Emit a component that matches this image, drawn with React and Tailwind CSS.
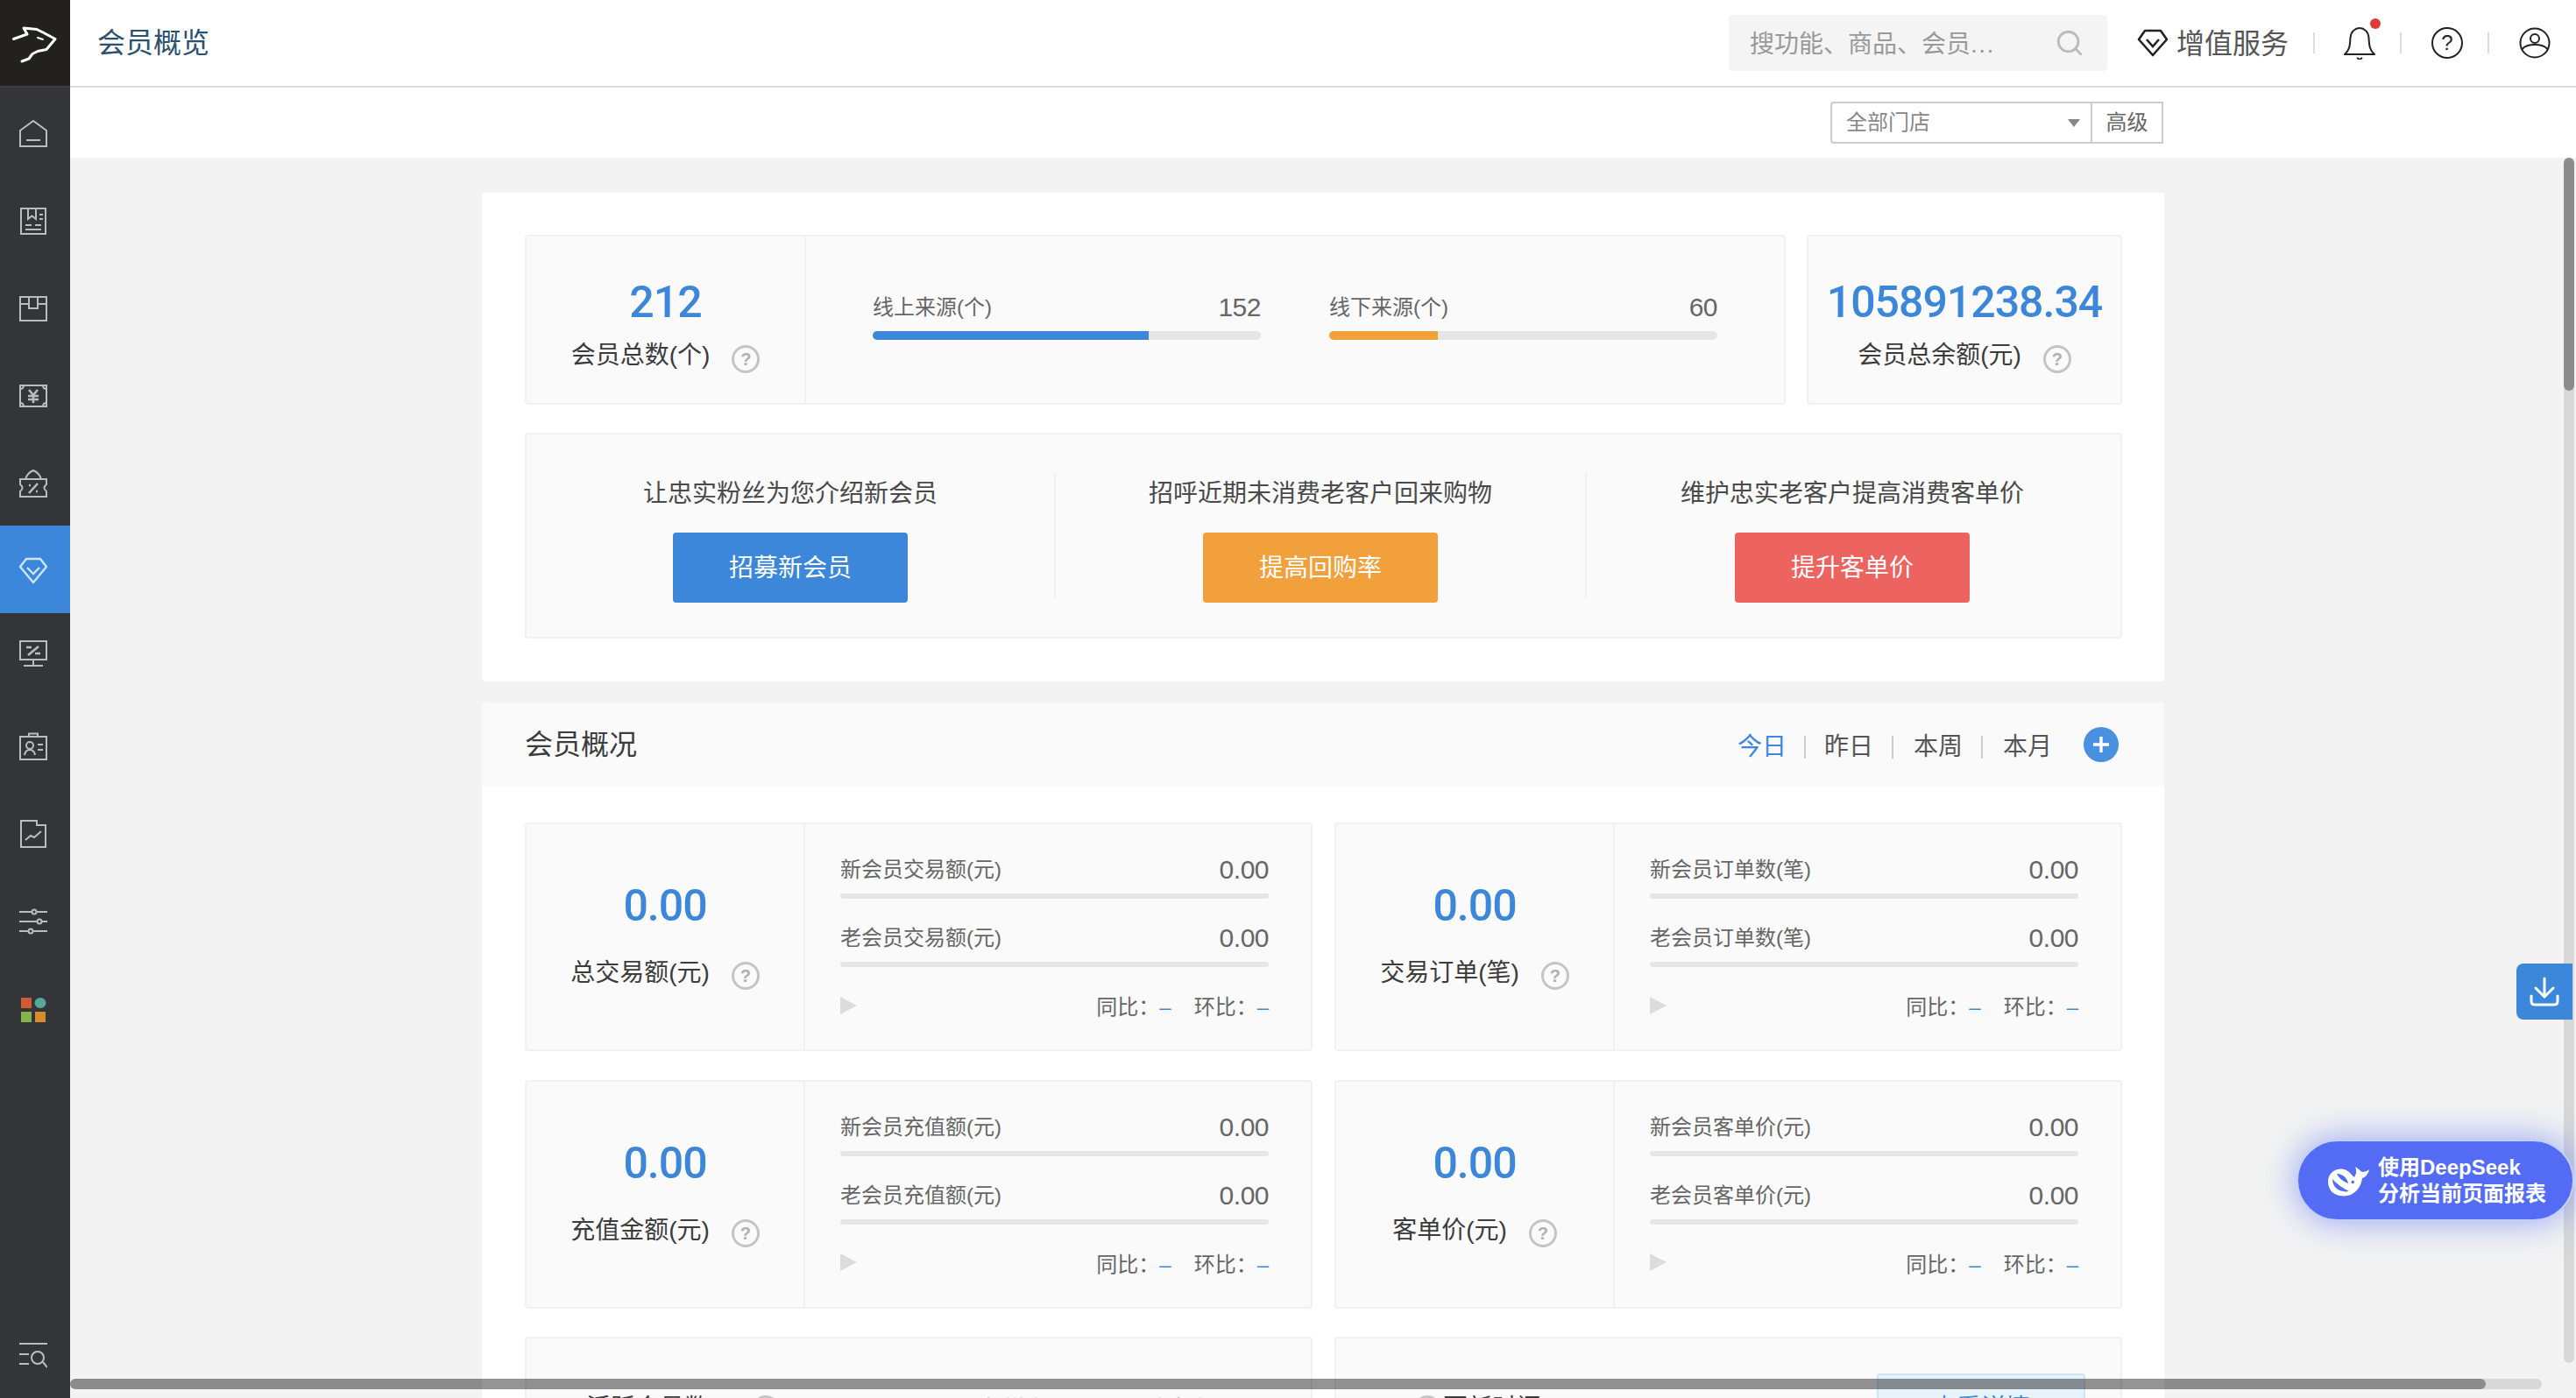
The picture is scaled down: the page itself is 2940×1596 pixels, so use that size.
import { Search } from 'lucide-react';

const FONT = "font-['Liberation_Sans','Noto_Sans_CJK_SC',sans-serif]";

function NavSvg({ children, stroke = '#bcbcbc', width = 2, className = '' }) {
  return (
    <svg className={className} width="32" height="32" viewBox="0 0 32 32" fill="none" stroke={stroke} strokeWidth={width}>
      {children}
    </svg>
  );
}

const navIcons = [
  <NavSvg key="home">
    <path d="M1 13 L16 2 L31 13 V31 H1 Z M8 24 H24" />
  </NavSvg>,
  <NavSvg key="book">
    <path d="M2 2 H30 V31 H2 Z M10 2 V14 L14.5 10.5 L19 14 V2 M23 9 H27 M23 14 H27 M7 21 H14 M18 21 H25 M7 26 H25" />
  </NavSvg>,
  <NavSvg key="box">
    <path d="M1 3 H31 V30 H1 Z M11 3 V16 H21 V3 M1 11 H11 M21 11 H31" />
  </NavSvg>,
  <NavSvg key="money">
    <path d="M1 4 H31 V28 H1 Z M1 8 Q5 8 5 4 M27 4 Q27 8 31 8 M1 24 Q5 24 5 28 M27 28 Q27 24 31 24" />
    <path d="M11 9 L16 15 L21 9 M16 15 V24 M10 16 H22 M10 20 H22" strokeWidth="2.6" />
  </NavSvg>,
  <NavSvg key="ticket">
    <path d="M1 11 H31 V17 Q26 21 31 25 V31 H1 V25 Q6 21 1 17 Z M7 11 Q9 4 16 1 Q23 4 25 11" />
    <path d="M11 27 L21 16 M11 18 H13 M19 25 H21" strokeWidth="2.6" />
  </NavSvg>,
  <NavSvg key="diamond" stroke="#cfe3fa" width="2.4">
    <path d="M8 2 H24 L31 11 L16 29 L1 11 Z" strokeLinejoin="round" />
    <path d="M9 12 L16 19 L23 12" />
  </NavSvg>,
  <NavSvg key="screen" className="mb-[12px]">
    <path d="M1 2 H31 V23 H1 Z M16 23 V29 M5 30 H27" />
    <path d="M10 18 L22 8 M8 9 H14 M18 16 H24" strokeWidth="2.6" />
  </NavSvg>,
  <NavSvg key="card">
    <path d="M1 5 H31 V31 H1 Z M11 1.5 H21 V5 H11 Z" />
    <circle cx="12" cy="15" r="4" />
    <path d="M6 26 Q7 20 12 20 Q17 20 18 26 M21 14 H27 M21 20 H27" />
  </NavSvg>,
  <NavSvg key="chart">
    <path d="M2 1 H20 V6 H30 V31 H2 Z M7 23 L13 18 L17 20 L25 13" />
  </NavSvg>,
  <NavSvg key="sliders">
    <path d="M0 5 H32 M0 16 H32 M0 27 H32" />
    <circle cx="17" cy="5" r="2.5" fill="#333538" />
    <circle cx="23" cy="16" r="2.5" fill="#333538" />
    <circle cx="13" cy="27" r="2.5" fill="#333538" />
  </NavSvg>,
  <svg key="grid" width="32" height="32" viewBox="0 0 32 32">
    <rect x="2" y="3" width="12" height="12" fill="#cf5a36" />
    <ellipse cx="24" cy="9" rx="6.5" ry="6" fill="#56a89c" />
    <rect x="2" y="19" width="12" height="12" fill="#84b34e" />
    <rect x="18" y="19" width="12" height="12" fill="#d98a2e" />
  </svg>,
];

function QuestionMark({ className = 'mt-[8px]' }) {
  return (
    <span className={'flex h-[32px] w-[32px] shrink-0 items-center justify-center rounded-full border-[3px] border-[#c4c4c4] text-[20px] leading-none font-bold text-[#b0b0b0] ' + className}>
      ?
    </span>
  );
}

function StatHead({ value, label }) {
  return (
    <div className="flex flex-col items-center">
      <div className="mb-[13px] font-['Roboto',sans-serif] text-[50px] leading-[56px] font-medium tracking-[-1px] text-[#3c87d9]">{value}</div>
      <div className="flex items-center gap-[25px]">
        <span className="text-[28px] leading-[40px] text-[#3c3c3c]">{label}</span>
        <QuestionMark />
      </div>
    </div>
  );
}

function Card({ className = '', children }) {
  return (
    <div className={'overflow-hidden rounded-[4px] border-2 border-[#f1f1f1] bg-[#fafafa] ' + className}>{children}</div>
  );
}

function SourceBar({ label, value, percent, color }) {
  return (
    <div>
      <div className="flex items-center justify-between text-[#666]">
        <span className="text-[24px] leading-[36px]">{label}</span>
        <span className="text-[30px] leading-[36px] tracking-[-0.5px]">{value}</span>
      </div>
      <div className="mt-[9px] h-[10px] overflow-hidden rounded-[5px] bg-[#e6e6e6]">
        <div className="h-full" style={{ width: `${percent}%`, backgroundColor: color }} />
      </div>
    </div>
  );
}

function Action({ title, button, color, last }) {
  return (
    <div className={'flex h-[143px] flex-col items-center ' + (last ? '' : 'border-r-2 border-[#f1f1f1]')}>
      <div className="text-[28px] leading-[48px] text-[#4a4a4a]">{title}</div>
      <button type="button" className={'mt-[20px] h-[80px] w-[268px] shrink-0 rounded-[4px] pt-[1px] text-[28px] text-white ' + color}>
        {button}
      </button>
    </div>
  );
}

function SubRow({ label, className = '' }) {
  return (
    <div className={className}>
      <div className="flex items-center justify-between text-[#666]">
        <span className="text-[24px] leading-[36px]">{label}</span>
        <span className="text-[30px] leading-[36px] tracking-[-0.5px]">0.00</span>
      </div>
      <div className="mt-[9px] h-[6px] rounded-[3px] bg-[#e6e6e6]" />
    </div>
  );
}

function StatCard({ total, newLabel, oldLabel }) {
  return (
    <Card className="flex h-[261px]">
      <div className="w-[318px] shrink-0 border-r-2 border-[#f1f1f1] pt-[65px]">
        <div className="flex flex-col items-center">
          <div className="font-['Roboto',sans-serif] text-[50px] leading-[56px] font-medium tracking-[-1px] text-[#3c87d9]">0.00</div>
          <div className="mt-[29px] flex items-center gap-[25px]">
            <span className="text-[28px] leading-[40px] text-[#3c3c3c]">{total}</span>
            <QuestionMark className="mt-[6px]" />
          </div>
        </div>
      </div>
      <div className="flex-1 pt-[34px] pr-[48px] pl-[40px]">
        <SubRow label={newLabel} />
        <SubRow label={oldLabel} className="mt-[27px]" />
        <div className="mt-[28px] flex h-[36px] items-center justify-between text-[24px] text-[#666]">
          <span className="-mt-[5px] h-0 w-0 border-y-[10px] border-l-[19px] border-y-transparent border-l-[#dcdcdc]" />
          <div className="flex gap-[26px]">
            <span>同比：<span className="text-[#3c87d9]">–</span></span>
            <span>环比：<span className="text-[#3c87d9]">–</span></span>
          </div>
        </div>
      </div>
    </Card>
  );
}

const stats = [
  { total: '总交易额(元)', newLabel: '新会员交易额(元)', oldLabel: '老会员交易额(元)' },
  { total: '交易订单(笔)', newLabel: '新会员订单数(笔)', oldLabel: '老会员订单数(笔)' },
  { total: '充值金额(元)', newLabel: '新会员充值额(元)', oldLabel: '老会员充值额(元)' },
  { total: '客单价(元)', newLabel: '新会员客单价(元)', oldLabel: '老会员客单价(元)' },
];

const ranges = ['今日', '昨日', '本周', '本月'];

export default function App() {
  return (
    <div className={'relative flex h-screen overflow-hidden bg-[#f3f3f3] ' + FONT}>
      <aside className="flex w-[80px] shrink-0 flex-col bg-[#333538]">
        <div className="h-[98px] shrink-0 bg-[#222120]">
          <svg width="80" height="98" viewBox="0 0 80 98" fill="none" stroke="#ffffff" strokeWidth="3" strokeLinejoin="round" strokeLinecap="round">
            <path d="M15.5 44.5 L31 39 L27 32 L42 33.5 L50 37.5 L63 44.5 L53 56.5 L43 58.5 L37 61.5 L33 67 L25 70" />
            <path d="M43 43 L49 45" strokeWidth="2" />
          </svg>
        </div>
        <div className="h-[2px] shrink-0 bg-[#3e4043]" />
        {navIcons.map((icon, i) => (
          <div key={i} className={'flex h-[100px] shrink-0 items-center pt-[4px] pl-[22px] ' + (i === 5 ? 'bg-[#3c87d9]' : '')}>
            {icon}
          </div>
        ))}
        <div className="mt-auto pb-[32px] pl-[22px]">
          <NavSvg>
            <path d="M0 2 H32 M0 14 H11 M0 25 H11 M27 23 L32 29" />
            <circle cx="21" cy="18" r="7" />
          </NavSvg>
        </div>
      </aside>

      <div className="flex min-w-0 flex-1 flex-col">
        <header className="flex h-[100px] shrink-0 items-center border-b-2 border-[#dddddd] bg-white pr-[29px] pl-[31px]">
          <h1 className="text-[32px] font-normal text-[#2c5070]">会员概览</h1>
          <div className="ml-auto flex h-[64px] w-[432px] items-center justify-between rounded-[4px] bg-[#f4f4f4] pr-[26px] pl-[24px]">
            <span className="pt-[3px] text-[28px] text-[#999]">搜功能、商品、会员<span className="tracking-[1.5px]">...</span></span>
            <Search size={34} strokeWidth={2} color="#bbbbbb" />
          </div>
          <svg className="ml-[34px]" width="36" height="32" viewBox="0 0 36 32" fill="none" stroke="#222" strokeWidth="2.6">
            <path d="M9 2 H27 L34 12 L18 30 L2 12 Z" strokeLinejoin="round" />
            <path d="M11 12 L18 20 L25 12" />
          </svg>
          <span className="ml-[9px] pt-[2px] text-[32px] text-[#555]">增值服务</span>
          <span className="ml-[28px] h-[24px] w-[2px] bg-[#dddddd]" />
          <div className="relative ml-[33px] h-[36px] w-[36px]">
            <svg width="36" height="37" viewBox="0 0 36 37" fill="none" stroke="#222" strokeWidth="2">
              <path d="M1 31 H35 C29 26 29 20 28.5 12 C28 5 23 1 18 1 C13 1 8 5 7.5 12 C7 20 7 26 1 31 Z" />
              <path d="M15 35 L18 37 L21 35" />
            </svg>
            <span className="absolute -top-[10px] left-[30px] h-[12px] w-[12px] rounded-full bg-[#e03c31]" />
          </div>
          <span className="ml-[28px] h-[24px] w-[2px] bg-[#dddddd]" />
          <span className="ml-[34px] flex h-[36px] w-[36px] items-center justify-center rounded-full border-2 border-[#222] text-[24px] leading-none text-[#222]">?</span>
          <span className="ml-[28px] h-[24px] w-[2px] bg-[#dddddd]" />
          <svg className="ml-[34px]" width="36" height="36" viewBox="0 0 36 36" fill="none" stroke="#222" strokeWidth="2">
            <circle cx="18" cy="18" r="16.5" />
            <circle cx="18" cy="13" r="5" />
            <path d="M3.5 25 C7 21 12 20 18 20 C24 20 29 21 32.5 25" />
          </svg>
        </header>

        <div className="flex h-[80px] shrink-0 items-center bg-white pl-[2009px] text-[24px]">
          <div className="flex h-[48px] w-[299px] items-center justify-between rounded-l-[4px] border-2 border-[#cccccc] pr-[12px] pl-[16px] text-[#888]">
            <span>全部门店</span>
            <span className="h-0 w-0 border-x-[7px] border-t-[9px] border-x-transparent border-t-[#888]" />
          </div>
          <div className="-ml-[2px] flex h-[48px] w-[83px] items-center justify-center border-2 border-[#cccccc] text-[#666]">高级</div>
        </div>

        <main className="min-h-0 flex-1 overflow-hidden pt-[40px] pl-[470px]">
          <section className="w-[1920px] rounded-[4px] bg-white pt-[48px] pr-[48px] pb-[49px] pl-[49px]">
            <div className="flex gap-[24px]">
              <Card className="flex h-[194px] flex-1">
                <div className="w-[319px] shrink-0 border-r-2 border-[#f1f1f1] pt-[47px]">
                  <StatHead value="212" label="会员总数(个)" />
                </div>
                <div className="grid flex-1 grid-cols-2 gap-[78px] px-[76px] pt-[63px]">
                  <SourceBar label="线上来源(个)" value="152" percent={71} color="#3c87d9" />
                  <SourceBar label="线下来源(个)" value="60" percent={28} color="#f2a03b" />
                </div>
              </Card>
              <Card className="h-[194px] w-[360px] shrink-0 pt-[47px]">
                <StatHead value="105891238.34" label="会员总余额(元)" />
              </Card>
            </div>
            <Card className="mt-[32px] grid h-[235px] grid-cols-[604px_606px_606px] pt-[44px]">
              <Action title="让忠实粉丝为您介绍新会员" button="招募新会员" color="bg-[#3c87d9]" />
              <Action title="招呼近期未消费老客户回来购物" button="提高回购率" color="bg-[#f2a03b]" />
              <Action title="维护忠实老客户提高消费客单价" button="提升客单价" color="bg-[#ed6360]" last />
            </Card>
          </section>

          <section className="mt-[24px] w-[1920px] rounded-t-[4px] bg-white">
            <div className="flex h-[96px] items-center justify-between rounded-t-[4px] bg-[#fafafa] pr-[52px] pl-[49px]">
              <h2 className="text-[32px] font-normal text-[#3c3c3c]">会员概况</h2>
              <div className="flex items-center pt-[6px]">
                {ranges.map((r, i) => (
                  <span key={r} className={'flex items-center text-[28px] leading-[40px] ' + (i === 0 ? 'text-[#3c87d9]' : 'text-[#555]')}>
                    {r}
                    {i < 3 && <span className={'h-[26px] w-[2px] bg-[#cccccc] ' + (i === 0 ? 'mr-[21px] ml-[20px]' : 'mr-[23px] ml-[21px]')} />}
                  </span>
                ))}
                <span className="-mt-[6px] ml-[36px] flex h-[40px] w-[40px] items-center justify-center rounded-full bg-[#4a90e0]">
                  <svg width="20" height="20" viewBox="0 0 20 20" stroke="#ffffff" strokeWidth="3.4">
                    <path d="M10 1 V19 M1 10 H19" />
                  </svg>
                </span>
              </div>
            </div>
            <div className="grid grid-cols-2 gap-x-[25px] gap-y-[32.5px] pt-[41px] pr-[48px] pl-[49px]">
              {stats.map((s) => (
                <StatCard key={s.total} {...s} />
              ))}
              <Card className="flex h-[261px] pt-[60px] pl-[68px]">
                <span className="w-[189px] text-[28px] leading-[40px] text-[#3c3c3c]">活跃会员数</span>
                <QuestionMark className="mt-[5px]" />
                <span className="ml-[232px] w-[187px] text-[24px] leading-[40px] text-[#666]">新增会员</span>
                <span className="text-[24px] leading-[40px] text-[#666]">流失会员</span>
              </Card>
              <Card className="flex h-[261px] pl-[88px]">
                <QuestionMark className="mt-[65px]" />
                <span className="mt-[60px] ml-[2px] text-[28px] leading-[40px] text-[#3c3c3c]">更新时间 2021</span>
                <div className="mt-[40px] mr-[40px] ml-auto h-[100px] w-[238px] rounded-[4px] border-2 border-[#cfe5f5] bg-[#e6f3fb] pt-[18px] text-center text-[28px] leading-[40px] text-[#3c87d9]">
                  查看详情
                </div>
              </Card>
            </div>
          </section>
        </main>
      </div>

      {/* scrollbars sit over the page */}
      <div className="absolute top-[180px] right-[2px] bottom-[40px] w-[12px] rounded-full bg-black/11">
        <div className="h-[266px] rounded-full bg-black/35" />
      </div>
      <div className="absolute top-[1574px] left-[80px] h-[12px] w-[2821px] rounded-full bg-black/11">
        <div className="h-full w-[2757px] rounded-full bg-black/35" />
      </div>

      <div className="absolute top-[1100px] right-[4px] flex h-[64px] w-[64px] items-center justify-center rounded-l-[8px] bg-[#3c87d9]">
        <svg width="34" height="34" viewBox="0 0 34 34" fill="none" stroke="#ffffff" strokeWidth="3" strokeLinecap="round" strokeLinejoin="round">
          <path d="M17 2 V23 M7 13 L17 23 L27 13 M2 22 V28 Q2 32 6 32 H28 Q32 32 32 28 V22" />
        </svg>
      </div>

      <div className="absolute top-[1301px] right-[2px] flex h-[93px] w-[317px] items-center rounded-full border-2 border-[#c6cefa] bg-[#546cf4] pl-[32px] shadow-[0_0_40px_rgba(84,108,244,0.6)]">
        <svg width="50" height="38" viewBox="0 0 50 38" fill="#ffffff">
          <path
            fillRule="evenodd"
            d="M2 20 C2 10 11 4 20 6 C26 7 28 12 32 15 C34 12 35 8 33 3 C37 5 39 8 41 9 C44 9 47 8 49 6 C48 11 45 15 41 16 C40 24 36 31 28 35 C20 38 9 36 5 30 C3 27 2 23 2 20 Z M7 17 C7 27 16 33 26 31 C20 28 12 23 7 17 Z M12 11 C14 16 20 20 25 22 C24 16 19 11 12 11 Z M29 19 C28 21 29 23 31 22 C33 21 32 18 29 19 Z"
          />
        </svg>
        <div className="ml-[9px] text-[24px] leading-[30px] font-semibold text-white">
          <div>使用DeepSeek</div>
          <div>分析当前页面报表</div>
        </div>
      </div>
    </div>
  );
}
